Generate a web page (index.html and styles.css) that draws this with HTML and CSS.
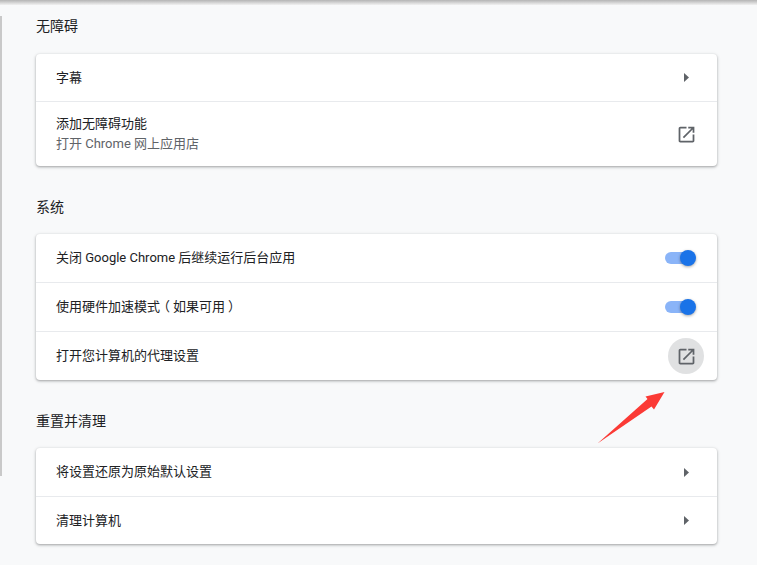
FILE: index.html
```html
<!DOCTYPE html>
<html lang="zh-CN">
<head>
<meta charset="utf-8">
<title>设置</title>
<link rel="stylesheet" href="styles.css">
</head>
<body>
<div class="topbar"></div>
<div class="edge"></div>
<main class="page">
  <section class="section">
    <h2 class="heading heading-first">无障碍</h2>
    <div class="card">
      <div class="row row-short">
        <span class="label">字幕</span>
        <svg class="caret" viewBox="0 0 5 9"><path d="M0 0l5 4.5L0 9z"/></svg>
      </div>
      <div class="row row-tall">
        <div class="stack">
          <span class="label">添加无障碍功能</span>
          <span class="sub">打开 Chrome 网上应用店</span>
        </div>
        <span class="iconbtn">
          <svg class="ext" viewBox="0 0 24 24"><path d="M19 19H5V5h7V3H5c-1.11 0-2 .9-2 2v14c0 1.1.89 2 2 2h14c1.1 0 2-.9 2-2v-7h-2v7zM14 3v2h3.59l-9.83 9.83 1.41 1.41L19 6.41V10h2V3h-7z"/></svg>
        </span>
      </div>
    </div>
  </section>
  <section class="section">
    <h2 class="heading">系统</h2>
    <div class="card">
      <div class="row">
        <span class="label">关闭 Google Chrome 后继续运行后台应用</span>
        <span class="toggle"><span class="knob"></span></span>
      </div>
      <div class="row">
        <span class="label">使用硬件加速模<span class="tight">式</span><span class="wide">（</span>如果可<span class="wide">用</span>）</span>
        <span class="toggle"><span class="knob"></span></span>
      </div>
      <div class="row">
        <span class="label">打开您计算机的代理设置</span>
        <span class="iconbtn iconbtn-hover">
          <svg class="ext" viewBox="0 0 24 24"><path d="M19 19H5V5h7V3H5c-1.11 0-2 .9-2 2v14c0 1.1.89 2 2 2h14c1.1 0 2-.9 2-2v-7h-2v7zM14 3v2h3.59l-9.83 9.83 1.41 1.41L19 6.41V10h2V3h-7z"/></svg>
        </span>
      </div>
    </div>
  </section>
  <section class="section">
    <h2 class="heading">重置并清理</h2>
    <div class="card">
      <div class="row">
        <span class="label">将设置还原为原始默认设置</span>
        <svg class="caret" viewBox="0 0 5 9"><path d="M0 0l5 4.5L0 9z"/></svg>
      </div>
      <div class="row row-end">
        <span class="label">清理计算机</span>
        <svg class="caret" viewBox="0 0 5 9"><path d="M0 0l5 4.5L0 9z"/></svg>
      </div>
    </div>
  </section>
</main>
<svg class="arrow" viewBox="0 0 757 565"><polygon points="597.5,443.5 647.5,399 645.5,396.5 664.5,392 654,409.5 651.5,406.5"/></svg>
</body>
</html>
```

FILE: styles.css
```css
* { box-sizing: border-box; }
html, body { margin: 0; padding: 0; }
body {
  position: relative;
  width: 757px;
  height: 565px;
  overflow: hidden;
  background: #f8f9fa;
  color: #202124;
  font-family: Roboto, "Noto Sans CJK SC", sans-serif;
  font-size: 13px;
}
.topbar {
  height: 5px;
  background: linear-gradient(#b4b4b4, #f1f1f1);
}
.edge {
  position: absolute;
  left: 0;
  top: 16px;
  width: 2px;
  height: 460px;
  background: #c9c9c9;
}
.page {
  display: flex;
  flex-direction: column;
  gap: 31px;
  padding: 11px 40px 0 36px;
}
.heading {
  margin: 0 0 17px;
  font-size: 14px;
  font-weight: 400;
  line-height: 20px;
}
.heading-first { margin-bottom: 18px; }
.card {
  background: #fff;
  border-radius: 4px;
  box-shadow: 0 1px 2px rgba(60, 64, 67, .3), 0 1px 3px 1px rgba(60, 64, 67, .15);
}
.row {
  display: flex;
  align-items: center;
  justify-content: space-between;
  height: 49px;
  padding: 0 28px 0 20px;
  border-top: 1px solid #e8eaed;
}
.row:first-child { height: 48px; border-top: 0; }
.row.row-short { height: 47px; }
.row-tall { height: 65px; }
.row-end { height: 48px; }
.stack { display: flex; flex-direction: column; }
.label, .sub { line-height: 20px; }
.sub { color: #5f6368; }
.tight { letter-spacing: -3px; }
.wide { letter-spacing: 3px; }
.caret { width: 5px; height: 9px; fill: #5f6368; }
.iconbtn {
  display: flex;
  align-items: center;
  justify-content: center;
  width: 36px;
  height: 36px;
  margin-right: -15px;
  border-radius: 50%;
}
.iconbtn-hover { background: #e0e1e2; }
.ext { width: 21px; height: 21px; fill: #5f6368; }
.toggle {
  position: relative;
  width: 28px;
  height: 12px;
  margin-right: -4px;
  border-radius: 6px;
  background: #8ab4f8;
}
.knob {
  position: absolute;
  right: -3px;
  top: -2px;
  width: 16px;
  height: 16px;
  border-radius: 50%;
  background: #1a73e8;
  box-shadow: 0 1px 3px rgba(0, 0, 0, .35);
}
.arrow {
  position: absolute;
  left: 0;
  top: 0;
  width: 757px;
  height: 565px;
  fill: #fb3a35;
  pointer-events: none;
}
```
